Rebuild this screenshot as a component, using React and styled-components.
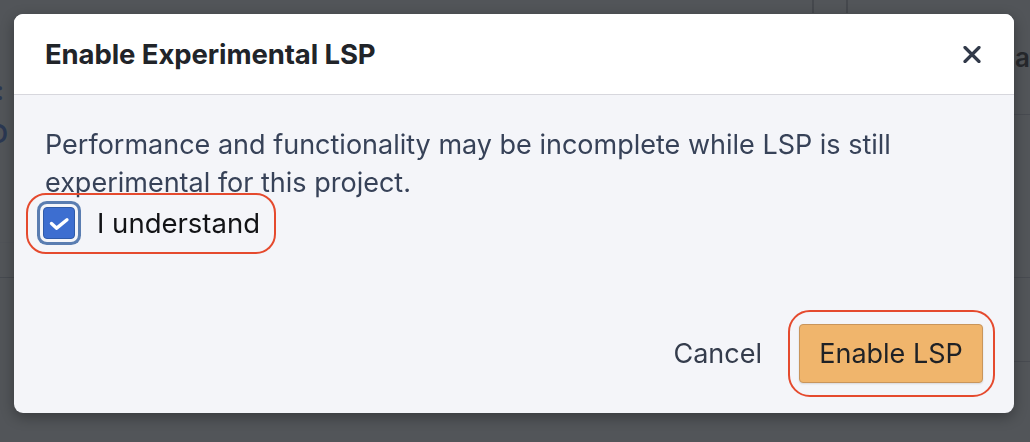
import { useState } from "react";
import styled, { createGlobalStyle } from "styled-components";

const GlobalStyle = createGlobalStyle`
  html, body {
    margin: 0;
    padding: 0;
    background: #505358;
    font-family: Inter, "Liberation Sans", Arial, sans-serif;
  }
  * { box-sizing: border-box; }
`;

/* dimmed app behind the modal */
const Backdrop = styled.div`
  display: flex;
  height: 442px;
  background: #525559;
  overflow: hidden;
`;

const SidePane = styled.div`
  width: ${(p) => p.$width}px;
  display: flex;
  flex-direction: column;
  color: #2b3852;
`;

const MainPane = styled.div`
  flex: 1;
  display: flex;
  justify-content: flex-end;
  gap: 32px;
  padding-right: 166px;
`;

const TopDivider = styled.div`
  width: 2px;
  height: 13px;
  background: #45484d;
`;

const PaneRow = styled.div`
  height: ${(p) => p.$h}px;
  flex-shrink: 0;
  display: flex;
  align-items: ${(p) => p.$align || "center"};
  justify-content: ${(p) => p.$justify || "flex-start"};
  padding: ${(p) => p.$pad || "0"};
  border-bottom: ${(p) => (p.$line ? `1.5px solid ${p.$line}` : "none")};
  font-size: 26px;
  font-weight: 600;
  white-space: nowrap;
  color: ${(p) => p.$color || "#2b3852"};
`;

const Overlay = styled.div`
  position: fixed;
  inset: 0;
  padding: 14px 16px 29px 14px;
  display: flex;
`;

const Dialog = styled.div`
  flex: 1;
  display: flex;
  flex-direction: column;
  background: #f4f5f9;
  border-radius: 9px;
  overflow: hidden;
  box-shadow: 0 4px 14px rgba(0, 0, 0, 0.32);
`;

const Header = styled.div`
  height: 81px;
  flex-shrink: 0;
  display: flex;
  align-items: center;
  justify-content: space-between;
  padding: 0 30px 0 31px;
  background: #ffffff;
  border-bottom: 1.5px solid #d7d7dd;
`;

const Title = styled.h2`
  margin: 0;
  font-size: 27.5px;
  font-weight: 700;
  color: #212429;
  letter-spacing: -0.1px;
`;

const CloseButton = styled.button`
  width: 24px;
  height: 24px;
  padding: 0;
  border: 0;
  background: none;
  display: flex;
  align-items: center;
  justify-content: center;
  cursor: pointer;
`;

const Body = styled.div`
  flex: 1;
  padding: 31px 31px 0;
`;

const Message = styled.p`
  margin: 0;
  font-size: 27px;
  line-height: 38px;
  color: #374258;
`;

const CheckRow = styled.label`
  position: relative;
  display: inline-flex;
  align-items: center;
  gap: 22px;
  height: 38px;
  margin-top: 2px;
  font-size: 27.5px;
  color: #121316;
  cursor: pointer;
`;

const Box = styled.span`
  width: 32px;
  height: 32px;
  margin-left: -2px;
  display: flex;
  align-items: center;
  justify-content: center;
  border-radius: 4px;
  background: ${(p) => (p.$checked ? "#3d6ed0" : "#fff")};
  border: 1px solid #2f5aa8;
  box-shadow: 0 0 0 3px #f4f5f9, 0 0 0 6px #5a7db1;
`;

const Annotation = styled.span`
  position: absolute;
  top: ${(p) => p.$t}px;
  right: ${(p) => p.$r}px;
  bottom: ${(p) => p.$b}px;
  left: ${(p) => p.$l}px;
  border: 2.5px solid #e54a2e;
  border-radius: ${(p) => p.$radius}px;
  pointer-events: none;
`;

const Footer = styled.div`
  display: flex;
  align-items: center;
  justify-content: flex-end;
  gap: 16px;
  padding: 0 31px 30px;
`;

const TextButton = styled.button`
  border: 0;
  background: none;
  padding: 0 21px;
  height: 59px;
  font-family: inherit;
  font-size: 27px;
  color: #343c4c;
  cursor: pointer;
`;

const ButtonWrap = styled.span`
  position: relative;
  display: inline-flex;
`;

const PrimaryButton = styled.button`
  width: 184px;
  height: 59px;
  border: 1.5px solid #c9955b;
  border-radius: 4px;
  background: #f0b56c;
  font-family: inherit;
  font-size: 27px;
  color: #1e2126;
  box-shadow: 0 1px 2px rgba(0, 0, 0, 0.12);
  cursor: pointer;
`;

export default function App() {
  const [checked, setChecked] = useState(true);

  return (
    <>
      <GlobalStyle />
      <Backdrop>
        <SidePane $width={14}>
          <PaneRow $h={72} />
          <PaneRow $h={36} $justify="flex-end" $pad="0 10px 0 0">:</PaneRow>
          <PaneRow $h={135} $justify="flex-end" $align="flex-start" $pad="10px 6px 0 0" $line="#505358">
            D
          </PaneRow>
          <PaneRow $h={35} $line="#464a50" />
        </SidePane>
        <MainPane>
          <TopDivider />
          <TopDivider />
        </MainPane>
        <SidePane $width={16}>
          <PaneRow $h={115} $line="#484b51" $color="#26282c" $pad="0 0 0 1px">a</PaneRow>
          <PaneRow $h={163} $line="#484b51" />
          <PaneRow $h={84} $line="#484b51" />
        </SidePane>
      </Backdrop>

      <Overlay>
        <Dialog>
          <Header>
            <Title>Enable Experimental LSP</Title>
            <CloseButton aria-label="Close">
              <svg width="18" height="17" viewBox="0 0 18 17">
                <path d="M2 1.5 L16 15.5 M16 1.5 L2 15.5" stroke="#323a4a" strokeWidth="3.2" strokeLinecap="round" />
              </svg>
            </CloseButton>
          </Header>

          <Body>
            <Message>
              Performance and functionality may be incomplete while LSP is still experimental for this project.
            </Message>
            <CheckRow onClick={() => setChecked(!checked)}>
              <Box $checked={checked}>
                {checked && (
                  <svg width="32" height="32" viewBox="0 0 32 32">
                    <polyline
                      points="8,16.5 13.5,21.5 24.5,12.5"
                      fill="none"
                      stroke="#ffffff"
                      strokeWidth="3.6"
                      strokeLinecap="round"
                      strokeLinejoin="round"
                    />
                  </svg>
                )}
              </Box>
              I understand
              <Annotation $t={-11} $r={-16} $b={-12} $l={-19} $radius={20} />
            </CheckRow>
          </Body>

          <Footer>
            <TextButton>Cancel</TextButton>
            <ButtonWrap>
              <PrimaryButton>Enable LSP</PrimaryButton>
              <Annotation $t={-14} $r={-12} $b={-14} $l={-11} $radius={22} />
            </ButtonWrap>
          </Footer>
        </Dialog>
      </Overlay>
    </>
  );
}
